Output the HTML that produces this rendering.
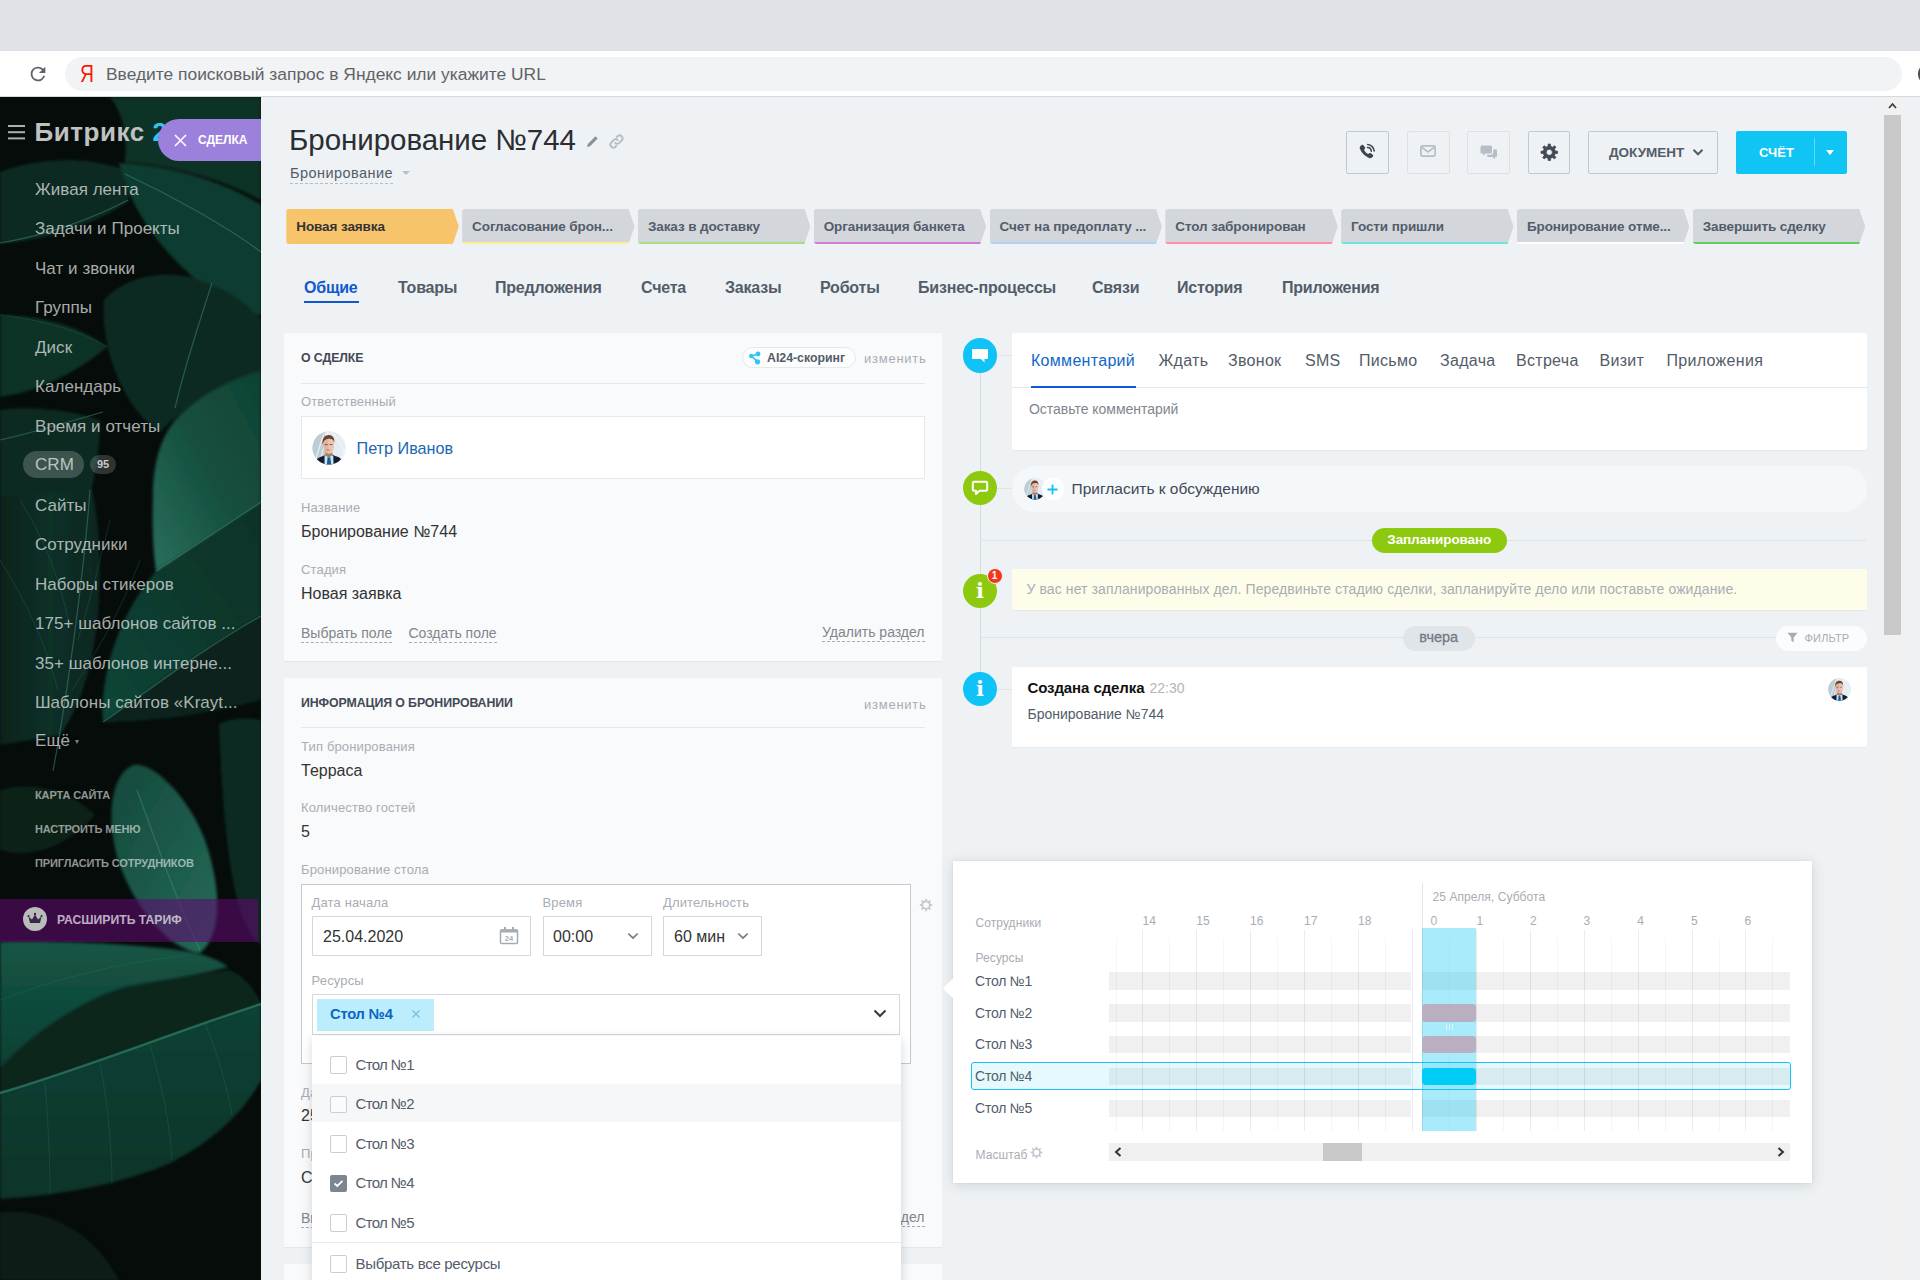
<!DOCTYPE html>
<html lang="ru"><head><meta charset="utf-8"><title>Бронирование №744</title>
<style>
*{box-sizing:border-box;margin:0;padding:0}
html,body{width:1920px;height:1280px;overflow:hidden;background:#eef2f4;font-family:"Liberation Sans",sans-serif;color:#333}
.abs{position:absolute}
#chrome-top{left:0;top:0;width:1920px;height:51px;background:#dee1e6}
#chrome-bar{left:0;top:51px;width:1920px;height:46px;background:#fff;border-bottom:1px solid #d5d9dd}
#omni{left:65px;top:57px;width:1837px;height:34px;border-radius:17px;background:#f1f3f4}
#omni-text{left:106px;top:63px;font-size:17.400px;line-height:22px;color:#5f6368;white-space:nowrap}
#ya{left:80px;top:61px;font-size:24px;line-height:26px;color:#fc1500;font-weight:400;transform:scaleX(.8);transform-origin:0 0}
/* sidebar */
#side{left:0;top:97px;width:261px;height:1183px;background:#07100e;overflow:hidden}
#side svg.bg{position:absolute;left:0;top:0}
.mi{position:absolute;left:35px;font-size:17px;line-height:22px;color:rgba(255,255,255,.66);white-space:nowrap;letter-spacing:.04px}
.ms{position:absolute;left:35px;font-size:11px;line-height:14px;font-weight:bold;color:rgba(255,255,255,.56);white-space:nowrap;letter-spacing:-.12px}
/* main */
#main{left:261px;top:97px;width:1623px;height:1183px;background:#eef2f4}
#title{left:289px;top:121.800px;font-size:29.5px;line-height:36px;color:#2a2e33;white-space:nowrap;letter-spacing:-.05px}
#subtitle{left:290px;top:164px;font-size:14.5px;line-height:18px;color:#535c69;border-bottom:1px dashed #b5bcc3;white-space:nowrap;padding-bottom:1px;letter-spacing:.45px}
.hbtn{top:131px;width:42.500px;height:43px;border:1px solid #c2c8ce;border-radius:2px;background:transparent}
.hbtn.dis{border-color:#dde1e5}
.stage{top:209px;width:172.500px;height:35px;padding-left:10px;font-size:13.5px;font-weight:bold;line-height:36px;white-space:nowrap;letter-spacing:-.1px;border-radius:3px 0 0 3px;clip-path:polygon(0 0,166.500px 0,172.500px 50%,166.500px 100%,0 100%)}
.tab{top:278px;font-size:16px;line-height:20px;font-weight:bold;color:#535c69;white-space:nowrap;letter-spacing:-.2px}
.tab.act{color:#1058d0}
.card{background:#f9fafb;box-shadow:0 1px 1px rgba(0,0,0,.04)}
.ctitle{font-size:12.350px;line-height:17px;font-weight:bold;color:#424956;white-space:nowrap;letter-spacing:-.1px}
.chg{font-size:13px;line-height:17px;color:#a8adb4;white-space:nowrap;letter-spacing:.75px}
.hr{height:1px;background:#e4e8eb}
.lbl{font-size:13px;line-height:17px;color:#a8adb4;white-space:nowrap;letter-spacing:.15px}
.val{font-size:16px;line-height:22px;color:#333;white-space:nowrap}
.lnk{font-size:14px;line-height:18px;color:#80868e;white-space:nowrap;border-bottom:1px dashed #a8adb4}
.inp{height:39.500px;background:#fff;border:1px solid #d3d8dd}
.circ{margin-top:-.5px;left:962.500px;width:34.500px;height:34.500px;border-radius:50%}
.ico-i{width:34px;height:34px;color:#fff;font-family:"DejaVu Serif","Liberation Serif",serif;font-weight:bold;font-size:21px;line-height:33px;text-align:center}
.rtab{top:351px;font-size:16px;line-height:20px;color:#535c69;white-space:nowrap;letter-spacing:.3px}
.plbl{font-size:12px;line-height:15px;color:#a8adb4;white-space:nowrap;letter-spacing:.08px}

</style></head><body>
<div id="chrome-top" class="abs"></div>
<div id="chrome-bar" class="abs"></div>
<div id="omni" class="abs"></div>
<svg class="abs" style="left:27px;top:63px" width="22" height="22" viewBox="0 0 24 24"><path d="M17.65 6.35A7.95 7.95 0 0 0 12 4a8 8 0 1 0 7.73 10h-2.08A6 6 0 1 1 12 6c1.66 0 3.14.69 4.22 1.78L13 11h7V4l-2.35 2.35z" fill="#5f6368"/></svg>
<div id="ya" class="abs">Я</div>
<div id="omni-text" class="abs">Введите поисковый запрос в Яндекс или укажите URL</div>
<div class="abs" style="left:1917.500px;top:63px;width:22px;height:22px;border-radius:11px;background:#4a4d51"></div>

<div id="side" class="abs">
<svg class="bg" width="261" height="1183" viewBox="0 97 261 1183">
<defs>
<filter id="b2" x="-10%" y="-10%" width="120%" height="120%"><feGaussianBlur stdDeviation="1.600"/></filter>
<filter id="b1"><feGaussianBlur stdDeviation=".7"/></filter>
<linearGradient id="gE" x1="1" y1="0" x2="0" y2="1"><stop offset="0" stop-color="#0f4234"/><stop offset=".5" stop-color="#15503f"/><stop offset="1" stop-color="#2a6f5d"/></linearGradient>
<linearGradient id="gI" x1="0" y1="0" x2="0" y2="1"><stop offset="0" stop-color="#135545"/><stop offset="1" stop-color="#0e4033"/></linearGradient>
<linearGradient id="gH" x1="0" y1="0" x2="0" y2="1"><stop offset="0" stop-color="#0f4235"/><stop offset="1" stop-color="#0b3329"/></linearGradient>
<linearGradient id="gG" x1="0" y1="0" x2="1" y2="1"><stop offset="0" stop-color="#14493b"/><stop offset="1" stop-color="#256a59"/></linearGradient>
<linearGradient id="gF" x1="0" y1="0" x2="1" y2="0"><stop offset="0" stop-color="#08231d"/><stop offset=".5" stop-color="#0c3028"/><stop offset="1" stop-color="#092720"/></linearGradient>
<linearGradient id="gE2" x1="0" y1="1" x2="1" y2="0"><stop offset="0" stop-color="#114638"/><stop offset=".6" stop-color="#0c372c"/><stop offset="1" stop-color="#0b3229"/></linearGradient>
</defs>
<rect x="0" y="97" width="261" height="1183" fill="#060c0a"/>
<g filter="url(#b2)">
<!-- A top right -->
<path d="M110 97 L261 97 L261 200 C220 178 170 165 125 162 C128 135 122 112 110 97Z" fill="#0b3328"/>
<!-- B -->
<path d="M119 163 C170 165 225 182 261 205 L261 316 C235 305 205 290 180 265 C150 235 128 200 119 163Z" fill="#0e3e31"/>
<!-- C left horizontal -->
<path d="M0 172 C30 160 80 155 119 168 C128 180 130 195 128 202 C100 220 60 238 0 244Z" fill="#0a2c24"/>
<!-- D center -->
<path d="M104 300 C125 278 160 268 200 280 C230 290 250 305 261 320 L261 372 C225 385 190 400 160 432 C125 410 100 350 104 300Z" fill="#0a2a22"/>
<!-- F' left horizontal 315-396 -->
<path d="M0 315 C30 315 75 322 107 347 C80 370 40 392 0 397Z" fill="#0b3028"/>
<!-- bottom-left of top third -->
<path d="M0 410 C35 405 75 412 100 420 C100 450 95 475 90 496 L0 496Z" fill="#0a2a22"/>
<!-- F left big -->
<path d="M0 496 L92 490 C99 520 101 560 99 600 C96 650 85 700 60 735 L0 745Z" fill="url(#gF)"/>
<!-- E2 dark leaf under E -->
<path d="M156 571 L261 503 L261 616 C200 650 150 690 103 722 C100 680 115 620 156 571Z" fill="url(#gE2)"/>
<path d="M103 722 C150 690 200 650 261 616 L261 700 C215 712 160 722 103 722Z" fill="#08221c"/>
<!-- E bright -->
<path d="M261 371 C235 378 205 392 180 415 C160 435 153 465 153 496 C152 525 153 550 156 571 L261 503Z" fill="url(#gE)"/>
<!-- right dark strip lower -->
<path d="M219 724 C240 715 261 720 261 720 L261 945 C240 930 225 880 219 724Z" fill="#092a23"/>
<!-- small top-left lower region -->
<path d="M0 790 C30 780 70 790 95 815 C70 845 30 860 0 850Z" fill="#082019"/>
<!-- G -->
<path d="M134 765 C150 762 185 790 205 840 C222 890 222 935 200 953 C170 950 135 910 118 860 C105 815 112 772 134 765Z" fill="url(#gG)"/>
<!-- I upper leaf -->
<path d="M0 942 C60 940 150 945 190 952 C210 956 222 962 228 967 C200 975 160 980 125 987 C80 1000 30 1035 0 1068Z" fill="url(#gI)"/>
<!-- H upper dark half -->
<path d="M0 1068 C30 1035 80 1000 125 987 C160 980 200 975 228 970 C245 975 255 990 261 1004 C180 1030 80 1070 0 1093Z" fill="#0a261f"/>
<!-- H lower half -->
<path d="M0 1093 C80 1070 180 1030 261 1004 L261 1080 C245 1110 215 1140 172 1162 C130 1182 60 1196 0 1199Z" fill="url(#gH)"/>
<path d="M0 1212 C40 1208 90 1225 119 1280 L0 1280Z" fill="#081c18"/>
<path d="M140 1215 C170 1200 215 1195 250 1200 C225 1215 180 1225 140 1215Z" fill="#07171300"/>
</g>
<!-- veins -->
<g fill="none" stroke="#3f8c79" stroke-opacity=".5" stroke-width="1.200" filter="url(#b1)">
<path d="M125 174 C170 195 225 225 261 252"/>
<path d="M261 502 L156 571"/>
<path d="M261 616 C200 650 150 690 103 722"/>
<path d="M90 490 C85 560 70 680 53 771"/>
<path d="M137 790 C155 840 180 910 200 950"/>
<path d="M0 1093 C80 1070 180 1030 261 1004" stroke-width="2.400" stroke="#2f8068" stroke-opacity=".7"/>
<path d="M0 243 C50 235 100 215 128 200"/>
<path d="M0 440 C35 432 75 420 103 412"/>
<path d="M212 283 C200 320 185 365 175 408"/>
</g>
<g fill="none" stroke="#2f7564" stroke-opacity=".3" stroke-width="1" filter="url(#b1)">
<path d="M45 1082 C48 1120 50 1160 50 1195"/><path d="M100 1063 C108 1105 112 1150 112 1185"/><path d="M150 1045 C162 1085 170 1125 172 1160"/><path d="M205 1023 C218 1055 228 1090 232 1115"/>
<path d="M20 500 C45 540 60 580 68 620"/><path d="M0 560 C25 600 45 640 58 690"/><path d="M110 520 C100 560 90 600 78 640"/><path d="M140 560 C125 600 105 640 72 690"/>
<path d="M0 1000 C40 985 100 965 190 955"/>
<path d="M0 315 C40 320 80 330 107 347"/>
</g>
</svg>

<div class="abs" style="left:8px;top:27.500px;width:17px;height:2px;background:#adb0af;box-shadow:0 6.200px 0 #adb0af,0 12.400px 0 #adb0af"></div>
<div class="abs" style="left:34.500px;top:18.700px;font-size:26px;line-height:32px;font-weight:bold;color:#c0c2c1;white-space:nowrap;letter-spacing:.55px">Битрикс <span style="color:#2fc6f6">24</span></div>
<div class="abs" style="left:158px;top:22px;width:110px;height:42px;border-radius:21px 0 0 21px;background:#9b80dc"></div>
<svg class="abs" style="left:174px;top:37px" width="13" height="13" viewBox="0 0 13 13"><path d="M1 1L12 12M12 1L1 12" stroke="#fff" stroke-width="1.6" fill="none"/></svg>
<div class="abs" style="left:198px;top:36px;font-size:12px;line-height:15px;font-weight:bold;color:#fff;letter-spacing:0px">СДЕЛКА</div>

<div class="mi" style="top:82px">Живая лента</div>
<div class="mi" style="top:121px">Задачи и Проекты</div>
<div class="mi" style="top:161px">Чат и звонки</div>
<div class="mi" style="top:200px">Группы</div>
<div class="mi" style="top:240px">Диск</div>
<div class="mi" style="top:279px">Календарь</div>
<div class="mi" style="top:319px">Время и отчеты</div>
<div class="abs" style="left:23px;top:354px;width:61px;height:27px;border-radius:14px;background:rgba(255,255,255,.2)"></div>
<div class="mi" style="top:357px">CRM</div>
<div class="abs" style="left:90px;top:358px;width:26px;height:19px;border-radius:10px;background:rgba(255,255,255,.17);color:rgba(255,255,255,.75);font-size:11px;font-weight:bold;line-height:19px;text-align:center">95</div>
<div class="mi" style="top:398px">Сайты</div>
<div class="mi" style="top:437px">Сотрудники</div>
<div class="mi" style="top:477px">Наборы стикеров</div>
<div class="mi" style="top:516px">175+ шаблонов сайтов ...</div>
<div class="mi" style="top:556px">35+ шаблонов интерне...</div>
<div class="mi" style="top:595px">Шаблоны сайтов «Krayt...</div>
<div class="mi" style="top:633px">Ещё <span style="font-size:8px;position:relative;top:-2px;opacity:.7">▾</span></div>
<div class="ms" style="top:691px">КАРТА САЙТА</div>
<div class="ms" style="top:725px">НАСТРОИТЬ МЕНЮ</div>
<div class="ms" style="top:759px">ПРИГЛАСИТЬ СОТРУДНИКОВ</div>
<div class="abs" style="left:0;top:801.500px;width:258px;height:43.500px;background:rgba(96,8,112,.58)"></div>
<div class="abs" style="left:23px;top:810px;width:24px;height:24px;border-radius:12px;background:#b9bcbb"></div>
<svg class="abs" style="left:27px;top:815px" width="16" height="14" viewBox="0 0 16 14"><path d="M1.5 4.5L5 7.5L8 2.5L11 7.5L14.500 4.5L13 11H3Z" fill="#3a2748"/><circle cx="8" cy="2" r="1.2" fill="#3a2748"/><circle cx="1.500" cy="4" r="1.1" fill="#3a2748"/><circle cx="14.500" cy="4" r="1.1" fill="#3a2748"/></svg>
<div class="abs" style="left:57px;top:815px;font-size:12.200px;line-height:16px;font-weight:bold;color:rgba(255,255,255,.68);white-space:nowrap">РАСШИРИТЬ ТАРИФ</div>

</div>
<div id="main" class="abs"></div>
<div class="abs" id="title">Бронирование №744</div>
<svg class="abs" style="left:586px;top:135px" width="13" height="13" viewBox="0 0 13 13"><path d="M1 12L1.800 9L9.500 1.300L11.700 3.500L4 11.200Z" fill="#8a9099"/></svg>
<svg class="abs" style="left:608px;top:133px" width="17" height="17" viewBox="0 0 17 17"><g fill="none" stroke="#b3bbc3" stroke-width="1.800" stroke-linecap="round"><path d="M7.200 9.800a3 3 0 0 0 4.200 0l2.600-2.600a3 3 0 0 0-4.200-4.200l-1 1"/><path d="M9.800 7.200a3 3 0 0 0-4.200 0l-2.600 2.600a3 3 0 0 0 4.200 4.200l1-1"/></g></svg>
<div class="abs" id="subtitle">Бронирование</div><div class="abs" style="left:402px;top:171px;width:0;height:0;border:4px solid transparent;border-top:4px solid #b8bfc6"></div>
<div class="abs hbtn" style="left:1346px"></div>
<svg class="abs" style="left:1357px;top:142px" width="20" height="20" viewBox="0 0 20 20"><path d="M4.500 3.200c.5-.5 1.300-.5 1.800 0l1.600 1.900c.4.500.4 1.100 0 1.600l-.9 1.100c.9 1.900 2.200 3.300 4.100 4.300l1.200-.9c.5-.4 1.100-.4 1.600 0l1.900 1.500c.5.500.6 1.300.1 1.800l-.9 1c-.8.800-2 .9-3 .5-4.400-1.800-7.400-4.900-9.100-9.200-.4-1-.2-2.200.6-2.900z" fill="#3e4550"/><path d="M10.500 5.500a4 4 0 0 1 3.800 3.800M10.700 2.600a7 7 0 0 1 6.500 6.500" fill="none" stroke="#3e4550" stroke-width="1.500" stroke-linecap="round"/></svg>
<div class="abs hbtn dis" style="left:1407px"></div>
<svg class="abs" style="left:1420px;top:145px" width="16" height="12" viewBox="0 0 16 12"><rect x=".9" y=".9" width="14.200" height="10.200" rx="1.500" fill="none" stroke="#b7bdc4" stroke-width="1.700"/><path d="M1.800 2.300L8 7L14.200 2.300" fill="none" stroke="#b7bdc4" stroke-width="1.600"/></svg>
<div class="abs hbtn dis" style="left:1467px"></div>
<svg class="abs" style="left:1479.500px;top:144.500px" width="18" height="15" viewBox="0 0 18 15"><path d="M2 .5h8.500a1.500 1.500 0 0 1 1.500 1.500v5a1.500 1.500 0 0 1-1.500 1.500H5.500L3 10.700V8.500H2A1.500 1.500 0 0 1 .5 7V2A1.500 1.500 0 0 1 2 .5z" fill="#b7bdc4"/><path d="M13.200 4.200h2.300A1.500 1.500 0 0 1 17 5.700v4.800a1.500 1.500 0 0 1-1.500 1.500H15v2.200L12.500 12H8.500A1.500 1.500 0 0 1 7.200 9.800h3.500a2.500 2.500 0 0 0 2.500-2.500z" fill="#b7bdc4"/></svg>
<div class="abs hbtn" style="left:1527.500px"></div>
<svg class="abs" style="left:1540px;top:142.700px" width="18.600" height="18.600" viewBox="0 0 20 20"><path fill-rule="evenodd" d="M16.46 8.65L18.92 8.82L18.92 11.18L16.46 11.35L15.52 13.61L17.15 15.47L15.47 17.15L13.61 15.52L11.35 16.46L11.18 18.92L8.82 18.92L8.65 16.46L6.39 15.52L4.53 17.15L2.85 15.47L4.48 13.61L3.54 11.35L1.08 11.18L1.08 8.82L3.54 8.65L4.48 6.39L2.85 4.53L4.53 2.85L6.39 4.48L8.65 3.54L8.82 1.08L11.18 1.08L11.35 3.54L13.61 4.48L15.47 2.85L17.15 4.53L15.52 6.39ZM6.70 10.00a3.30 3.30 0 1 0 6.60 0a3.30 3.30 0 1 0 -6.60 0Z" fill="#424956" stroke="#424956" stroke-width=".8" stroke-linejoin="round"/></svg>
<div class="abs hbtn" style="left:1588px;width:130px"></div>
<div class="abs" style="left:1609px;top:144px;font-size:13.500px;line-height:18px;font-weight:bold;color:#535c69;letter-spacing:0">ДОКУМЕНТ</div>
<svg class="abs" style="left:1692px;top:148px" width="12" height="9" viewBox="0 0 12 9"><path d="M1.500 1.800L6 6.300L10.500 1.800" fill="none" stroke="#535c69" stroke-width="2"/></svg>
<div class="abs" style="left:1736px;top:131px;width:111px;height:43px;background:#10c4f3;border-radius:2px"></div>
<div class="abs" style="left:1814px;top:138px;width:1px;height:28px;background:rgba(255,255,255,.35)"></div>
<div class="abs" style="left:1759px;top:144px;font-size:13px;line-height:18px;font-weight:bold;color:#fff;letter-spacing:0">СЧЁТ</div>
<div class="abs" style="left:1826px;top:150px;width:0;height:0;border:4.500px solid transparent;border-top:5px solid #fff"></div>
<div class="abs stage" style="left:286.3px;background:linear-gradient(#f7c46c 0,#f7c46c 33px,#f7c46c 33px);color:#333">Новая заявка</div>
<div class="abs stage" style="left:462.1px;background:linear-gradient(#d3d7dc 0,#d3d7dc 33px,#fcef94 33px);color:#535c69">Согласование брон...</div>
<div class="abs stage" style="left:637.9px;background:linear-gradient(#d3d7dc 0,#d3d7dc 33px,#a5e17a 33px);color:#535c69">Заказ в доставку</div>
<div class="abs stage" style="left:813.7px;background:linear-gradient(#d3d7dc 0,#d3d7dc 33px,#d779d9 33px);color:#535c69">Организация банкета</div>
<div class="abs stage" style="left:989.5px;background:linear-gradient(#d3d7dc 0,#d3d7dc 33px,#a9d4f6 33px);color:#535c69">Счет на предоплату ...</div>
<div class="abs stage" style="left:1165.3px;background:linear-gradient(#d3d7dc 0,#d3d7dc 33px,#ff8fa6 33px);color:#535c69">Стол забронирован</div>
<div class="abs stage" style="left:1341.1px;background:linear-gradient(#d3d7dc 0,#d3d7dc 33px,#6fe3dc 33px);color:#535c69">Гости пришли</div>
<div class="abs stage" style="left:1516.9px;background:linear-gradient(#d3d7dc 0,#d3d7dc 33px,#ffffff 33px);color:#535c69">Бронирование отме...</div>
<div class="abs stage" style="left:1692.7px;background:linear-gradient(#d3d7dc 0,#d3d7dc 33px,#5fce5f 33px);color:#535c69">Завершить сделку</div>
<div class="abs tab act" style="left:304px">Общие</div>
<div class="abs tab" style="left:398px">Товары</div>
<div class="abs tab" style="left:495px">Предложения</div>
<div class="abs tab" style="left:641px">Счета</div>
<div class="abs tab" style="left:725px">Заказы</div>
<div class="abs tab" style="left:820px">Роботы</div>
<div class="abs tab" style="left:918px">Бизнес-процессы</div>
<div class="abs tab" style="left:1092px">Связи</div>
<div class="abs tab" style="left:1177px">История</div>
<div class="abs tab" style="left:1282px">Приложения</div>
<div class="abs" style="left:304px;top:301px;width:55px;height:2px;background:#1058d0"></div>
<div class="abs card" style="left:284px;top:333px;width:658px;height:328px"></div>
<div class="abs ctitle" style="left:301px;top:350px">О СДЕЛКЕ</div>
<div class="abs" style="left:742px;top:347px;width:114px;height:21px;border:1px solid #e6e9ec;border-radius:11px;background:#fcfdfd"></div>
<svg class="abs" style="left:748px;top:350.500px" width="14" height="14" viewBox="0 0 14 14"><g fill="#2fc6f6"><circle cx="3.200" cy="5" r="2.200"/><circle cx="10" cy="3" r="2.400"/><circle cx="9.500" cy="10.800" r="2.600"/><path d="M3 4.300L10 2.300L10.300 3.700L3.400 5.800ZM3.700 4.400L10.200 10L9 11.300L2.800 5.800Z"/></g></svg>
<div class="abs" style="left:767px;top:349.500px;font-size:12.300px;line-height:16px;font-weight:bold;color:#535c69;white-space:nowrap">AI24-скоринг</div>
<div class="abs chg" style="left:864px;top:350px">изменить</div>
<div class="abs hr" style="left:301px;top:382.500px;width:624px"></div>
<div class="abs lbl" style="left:301px;top:393px">Ответственный</div>
<div class="abs" style="left:301px;top:415.500px;width:624px;height:63px;background:#fff;border:1px solid #e6eaed"></div>
<svg class="abs" style="left:312px;top:431px" width="34" height="34" viewBox="0 0 34 34"><defs><clipPath id="av1"><circle cx="17" cy="17" r="16.500"/></clipPath></defs><g clip-path="url(#av1)"><rect width="34" height="34" fill="#d3e0e7"/><path d="M0 0h13v34H0z" fill="#bccdd6"/><path d="M13 0h21v34H13z" fill="#e3edf2"/><path d="M3 30L12 2M7 34L16 0M20 0L34 22M24 0L34 14M26 34L34 16" stroke="#f4f8fa" stroke-width="1.200" fill="none" opacity=".8"/><path d="M2 34C3 28.500 6 26.500 11.500 25l4-2.200h3.500l4 2.200C28 26 30.500 28 31.500 34z" fill="#161c31"/><path d="M12.600 24.800L16.500 23l4.800 1.800L21.500 34h-9z" fill="#c9e6f4"/><path d="M15.600 26.200h2.600l1.200 7.800h-4.600z" fill="#1a5f98"/><path d="M13.300 20.500h7v3.300c-1 1.600-2.200 2.300-3.500 2.300s-2.500-.7-3.500-2.300z" fill="#b27a60"/><path d="M10.900 12.500c0-4.500 2.400-7 5.800-7s5.500 2.500 5.500 7c0 4.300-1.300 8-2.800 9.500-1 .9-4 .9-5.200 0-1.800-1.500-3.300-5.200-3.300-9.500z" fill="#e2b39d"/><path d="M16.500 6c2.800 0 5 2 5.600 6 .2 3-.6 7-2.300 9.600-.6.600-1.800.9-3.300.9z" fill="#f0cfc0" opacity=".7"/><path d="M10.600 13.500C10 8 12.500 4 16.800 4c3.800 0 5.800 2.800 5.500 7.500-.6-2.200-1.700-3.300-3.200-3.600-2.200-.4-4.500 0-6 1-1.300 1-2 2.500-2.500 4.600z" fill="#6e4129"/><path d="M12.800 13.600h2.800M17.600 13.600h2.800" stroke="#4a2f25" stroke-width="1" opacity=".75"/><path d="M14.800 19h3.600" stroke="#a8574d" stroke-width=".9" opacity=".7"/></g></svg>
<div class="abs" style="left:356.500px;top:437px;font-size:16.200px;line-height:22px;color:#2067b0;white-space:nowrap">Петр Иванов</div>
<div class="abs lbl" style="left:301px;top:499px">Название</div>
<div class="abs val" style="left:301px;top:521px">Бронирование №744</div>
<div class="abs lbl" style="left:301px;top:561px">Стадия</div>
<div class="abs val" style="left:301px;top:582.500px">Новая заявка</div>
<div class="abs lnk" style="left:301px;top:624px">Выбрать поле</div>
<div class="abs lnk" style="left:408.500px;top:624px">Создать поле</div>
<div class="abs lnk" style="left:822px;top:623px">Удалить раздел</div>

<div class="abs card" style="left:284px;top:678px;width:658px;height:569px"></div>
<div class="abs ctitle" style="left:301px;top:695px">ИНФОРМАЦИЯ О БРОНИРОВАНИИ</div>
<div class="abs chg" style="left:864px;top:696px">изменить</div>
<div class="abs hr" style="left:301px;top:726.800px;width:624px"></div>
<div class="abs lbl" style="left:301px;top:738px">Тип бронирования</div>
<div class="abs val" style="left:301px;top:759.500px">Терраса</div>
<div class="abs lbl" style="left:301px;top:799px">Количество гостей</div>
<div class="abs val" style="left:301px;top:820.500px">5</div>
<div class="abs lbl" style="left:301px;top:860.5px">Бронирование стола</div>
<div class="abs" style="left:301px;top:883.500px;width:610px;height:180px;background:#fff;border:1px solid #c3c9cf"></div>
<svg class="abs" style="left:919px;top:898px" width="14" height="14" viewBox="0 0 20 20"><path fill-rule="evenodd" d="M16.46 8.65L18.92 8.82L18.92 11.18L16.46 11.35L15.52 13.61L17.15 15.47L15.47 17.15L13.61 15.52L11.35 16.46L11.18 18.92L8.82 18.92L8.65 16.46L6.39 15.52L4.53 17.15L2.85 15.47L4.48 13.61L3.54 11.35L1.08 11.18L1.08 8.82L3.54 8.65L4.48 6.39L2.85 4.53L4.53 2.85L6.39 4.48L8.65 3.54L8.82 1.08L11.18 1.08L11.35 3.54L13.61 4.48L15.47 2.85L17.15 4.53L15.52 6.39ZM5.90 10.00a4.10 4.10 0 1 0 8.20 0a4.10 4.10 0 1 0 -8.20 0Z" fill="#c3c8ce"/></svg>
<div class="abs lbl" style="left:311.500px;top:893.5px">Дата начала</div>
<div class="abs lbl" style="left:542.500px;top:893.5px">Время</div>
<div class="abs lbl" style="left:663px;top:893.5px">Длительность</div>
<div class="abs inp" style="left:312px;top:916.300px;width:219px"></div>
<div class="abs inp" style="left:542.500px;top:916.300px;width:109.500px"></div>
<div class="abs inp" style="left:663px;top:916.300px;width:98.500px"></div>
<div class="abs val" style="left:323px;top:925.500px">25.04.2020</div>
<div class="abs val" style="left:553px;top:925.500px">00:00</div>
<div class="abs val" style="left:674px;top:925.500px">60 мин</div>
<svg class="abs" style="left:499px;top:926px" width="20" height="19" viewBox="0 0 20 19"><rect x="1.500" y="4" width="17" height="13.500" rx="1" fill="none" stroke="#a5abb3" stroke-width="1.500"/><rect x="1.500" y="3.500" width="17" height="3" fill="#a5abb3"/><rect x="5" y="1" width="2" height="4" fill="#a5abb3"/><rect x="13" y="1" width="2" height="4" fill="#a5abb3"/><text x="10" y="15" text-anchor="middle" font-family="Liberation Sans, sans-serif" font-size="7.500" font-weight="bold" fill="#a5abb3">24</text></svg>
<svg class="abs" style="left:627px;top:932px" width="12" height="8" viewBox="0 0 12 8"><path d="M1.300 1.500L6 6L10.700 1.500" fill="none" stroke="#6f7782" stroke-width="1.700"/></svg>
<svg class="abs" style="left:737px;top:932px" width="12" height="8" viewBox="0 0 12 8"><path d="M1.300 1.500L6 6L10.700 1.500" fill="none" stroke="#6f7782" stroke-width="1.700"/></svg>
<div class="abs lbl" style="left:311.500px;top:971.5px">Ресурсы</div>
<div class="abs" style="left:312px;top:994px;width:588px;height:41px;background:#fff;border:1px solid #d3d8dd"></div>
<div class="abs" style="left:316.500px;top:998.500px;width:117px;height:32.500px;background:#bcedfc"></div>
<div class="abs" style="left:330px;top:1004px;font-size:14.700px;line-height:20px;color:#0b66c3;white-space:nowrap;font-weight:bold;letter-spacing:-.2px">Стол №4</div>
<svg class="abs" style="left:411px;top:1009px" width="10" height="10" viewBox="0 0 10 10"><path d="M1.500 1.500L8.500 8.500M8.500 1.500L1.500 8.500" stroke="#7fc4e6" stroke-width="1.500" fill="none"/></svg>
<svg class="abs" style="left:873px;top:1009px" width="14" height="9" viewBox="0 0 14 9"><path d="M1.500 1.500L7 7L12.500 1.500" fill="none" stroke="#333a44" stroke-width="2"/></svg>
<div class="abs lbl" style="left:301px;top:1084px">Дата окончания</div>
<div class="abs val" style="left:301px;top:1105px">25.04.2020</div>
<div class="abs lbl" style="left:301px;top:1145px">Примечание</div>
<div class="abs val" style="left:301px;top:1167px">Столик у окна</div>
<div class="abs lnk" style="left:301px;top:1209px">Выбрать поле</div>
<div class="abs lnk" style="left:822px;top:1208px">Удалить раздел</div>
<div class="abs card" style="left:284px;top:1264px;width:658px;height:40px"></div>

<div class="abs" style="left:979.500px;top:356px;width:1px;height:333px;background:#d5dadf"></div>
<div class="abs" style="left:997px;top:355px;width:15px;height:1px;background:#dfe4e8"></div>
<div class="abs" style="left:997px;top:488px;width:15px;height:1px;background:#dfe4e8"></div>
<div class="abs" style="left:997px;top:689px;width:15px;height:1px;background:#dfe4e8"></div>
<div class="abs" style="left:980px;top:539.500px;width:886px;height:1px;background:#dde2e6"></div>
<div class="abs" style="left:980px;top:637px;width:886px;height:1px;background:#dde2e6"></div>
<!-- circles -->
<div class="abs circ" style="top:338.500px;background:#10c3f6"></div>
<svg class="abs" style="left:970.500px;top:348px" width="18" height="16" viewBox="0 0 18 16"><path d="M2 1h14a1 1 0 0 1 1 1v8a1 1 0 0 1-1 1h-2.500v3.500L10 11H2a1 1 0 0 1-1-1V2a1 1 0 0 1 1-1z" fill="#fff"/></svg>
<div class="abs circ" style="top:471px;background:#8dc90f"></div>
<svg class="abs" style="left:970.500px;top:480px" width="18" height="17" viewBox="0 0 18 17"><path d="M3 1.800h12a1.200 1.200 0 0 1 1.200 1.200v6.500a1.200 1.200 0 0 1-1.200 1.200H8.500L5 14v-3.300H3a1.200 1.200 0 0 1-1.200-1.200V3A1.200 1.200 0 0 1 3 1.800z" fill="none" stroke="#fff" stroke-width="2" stroke-linejoin="round"/></svg>
<div class="abs circ" style="top:574px;background:#8dc90f"></div>
<div class="abs ico-i" style="left:963px;top:574px">i</div>
<div class="abs" style="left:986.500px;top:567.500px;width:16px;height:16px;border-radius:8px;background:#f4361e;border:1.500px solid #eef2f4;color:#fff;font-size:10px;font-weight:bold;line-height:13px;text-align:center">1</div>
<div class="abs circ" style="top:672px;background:#10c3f6"></div>
<div class="abs ico-i" style="left:963px;top:672px">i</div>
<!-- comment card -->
<div class="abs" style="left:1011.500px;top:333px;width:855px;height:116.500px;border-radius:2px;background:#fff;box-shadow:0 1px 1px rgba(0,0,0,.04)"></div>
<div class="abs" style="left:1011.500px;top:387px;width:855px;height:1px;background:#e6eaed"></div>
<div class="abs" style="left:1031px;top:386px;width:104.500px;height:2px;background:#1058d0"></div>
<div class="abs rtab" style="left:1031px;color:#1068c8">Комментарий</div>
<div class="abs rtab" style="left:1158.500px">Ждать</div>
<div class="abs rtab" style="left:1228px">Звонок</div>
<div class="abs rtab" style="left:1305px">SMS</div>
<div class="abs rtab" style="left:1359px">Письмо</div>
<div class="abs rtab" style="left:1440px">Задача</div>
<div class="abs rtab" style="left:1516px">Встреча</div>
<div class="abs rtab" style="left:1599.500px">Визит</div>
<div class="abs rtab" style="left:1666.500px">Приложения</div>
<div class="abs" style="left:1029px;top:400px;font-size:14px;line-height:18px;color:#80868e;white-space:nowrap;letter-spacing:-.02px">Оставьте комментарий</div>
<!-- invite -->
<div class="abs" style="left:1011.500px;top:466px;width:855px;height:46px;border-radius:23px;background:#f5f8fa"></div>
<svg class="abs" style="left:1024px;top:478px" width="22" height="22" viewBox="0 0 34 34"><g clip-path="url(#av1)"><rect width="34" height="34" fill="#d3e0e7"/><path d="M0 0h13v34H0z" fill="#bccdd6"/><path d="M13 0h21v34H13z" fill="#e3edf2"/><path d="M3 30L12 2M7 34L16 0M20 0L34 22M24 0L34 14M26 34L34 16" stroke="#f4f8fa" stroke-width="1.200" fill="none" opacity=".8"/><path d="M2 34C3 28.500 6 26.500 11.500 25l4-2.200h3.500l4 2.200C28 26 30.500 28 31.500 34z" fill="#161c31"/><path d="M12.600 24.800L16.500 23l4.800 1.800L21.500 34h-9z" fill="#c9e6f4"/><path d="M15.600 26.200h2.600l1.200 7.800h-4.600z" fill="#1a5f98"/><path d="M13.300 20.500h7v3.300c-1 1.600-2.200 2.300-3.500 2.300s-2.500-.7-3.500-2.300z" fill="#b27a60"/><path d="M10.900 12.500c0-4.500 2.400-7 5.800-7s5.500 2.500 5.500 7c0 4.300-1.300 8-2.800 9.500-1 .9-4 .9-5.200 0-1.800-1.500-3.300-5.200-3.300-9.500z" fill="#e2b39d"/><path d="M16.500 6c2.800 0 5 2 5.600 6 .2 3-.6 7-2.300 9.600-.6.600-1.800.9-3.300.9z" fill="#f0cfc0" opacity=".7"/><path d="M10.600 13.500C10 8 12.500 4 16.800 4c3.800 0 5.800 2.800 5.500 7.500-.6-2.200-1.700-3.300-3.200-3.600-2.200-.4-4.500 0-6 1-1.300 1-2 2.500-2.500 4.600z" fill="#6e4129"/><path d="M12.800 13.600h2.800M17.600 13.600h2.800" stroke="#4a2f25" stroke-width="1" opacity=".75"/><path d="M14.800 19h3.600" stroke="#a8574d" stroke-width=".9" opacity=".7"/></g></svg>
<div class="abs" style="left:1041.500px;top:478px;width:22px;height:22px;border-radius:11px;background:#fff"></div>
<svg class="abs" style="left:1047px;top:483.500px" width="11" height="11" viewBox="0 0 11 11"><path d="M5.500 0.500V10.500M0.500 5.500H10.500" stroke="#10c3f6" stroke-width="1.800" fill="none"/></svg>
<div class="abs" style="left:1071.500px;top:478.500px;font-size:15.500px;line-height:20px;color:#424956;white-space:nowrap;letter-spacing:0">Пригласить к обсуждению</div>
<!-- planned -->
<div class="abs" style="left:1371.500px;top:528px;width:135.500px;height:24.500px;border-radius:12.500px;background:#8dc90f;color:#fff;font-size:13.500px;font-weight:bold;line-height:24px;text-align:center;letter-spacing:-.1px">Запланировано</div>
<div class="abs" style="left:1011.500px;top:569px;width:855px;height:41px;background:#fefde9;box-shadow:0 1px 1px rgba(0,0,0,.04)"></div>
<div class="abs" style="left:1026.500px;top:580px;font-size:14px;line-height:18px;color:#a8adb4;white-space:nowrap;letter-spacing:.1px">У вас нет запланированных дел. Передвиньте стадию сделки, запланируйте дело или поставьте ожидание.</div>
<!-- yesterday -->
<div class="abs" style="left:1403px;top:626px;width:71.500px;height:24.500px;border-radius:12.500px;background:#dfe5e9;color:#727a84;font-size:14.500px;line-height:23.500px;text-align:center;-webkit-text-stroke:.3px #727a84">вчера</div>
<div class="abs" style="left:1775.500px;top:626px;width:91px;height:24.500px;border-radius:12.500px;background:#fbfcfd"></div>
<svg class="abs" style="left:1787px;top:632px" width="11" height="11" viewBox="0 0 11 11"><path d="M0.500 0.800h10L6.700 5.500v4.700L4.300 8.700V5.500z" fill="#a8adb4"/></svg>
<div class="abs" style="left:1804.500px;top:631px;font-size:11px;line-height:14px;color:#a8adb4;letter-spacing:.2px">ФИЛЬТР</div>
<!-- event -->
<div class="abs" style="left:1011.500px;top:666.500px;width:855px;height:80.500px;border-radius:2px;background:#fff;box-shadow:0 1px 1px rgba(0,0,0,.04)"></div>
<div class="abs" style="left:1027.500px;top:678px;font-size:15px;line-height:20px;color:#111;font-weight:bold;white-space:nowrap;letter-spacing:-.1px">Создана сделка</div>
<div class="abs" style="left:1149.500px;top:679px;font-size:14px;line-height:18px;color:#b0b5bb;white-space:nowrap">22:30</div>
<div class="abs" style="left:1027.500px;top:705px;font-size:14px;line-height:18px;color:#535c69;white-space:nowrap">Бронирование №744</div>
<svg class="abs" style="left:1828px;top:678px" width="23" height="23" viewBox="0 0 34 34"><g clip-path="url(#av1)"><rect width="34" height="34" fill="#d3e0e7"/><path d="M0 0h13v34H0z" fill="#bccdd6"/><path d="M13 0h21v34H13z" fill="#e3edf2"/><path d="M3 30L12 2M7 34L16 0M20 0L34 22M24 0L34 14M26 34L34 16" stroke="#f4f8fa" stroke-width="1.200" fill="none" opacity=".8"/><path d="M2 34C3 28.500 6 26.500 11.500 25l4-2.200h3.500l4 2.200C28 26 30.500 28 31.500 34z" fill="#161c31"/><path d="M12.600 24.800L16.500 23l4.800 1.800L21.500 34h-9z" fill="#c9e6f4"/><path d="M15.600 26.200h2.600l1.200 7.800h-4.600z" fill="#1a5f98"/><path d="M13.300 20.500h7v3.300c-1 1.600-2.200 2.300-3.500 2.300s-2.500-.7-3.500-2.300z" fill="#b27a60"/><path d="M10.900 12.500c0-4.500 2.400-7 5.800-7s5.500 2.500 5.500 7c0 4.300-1.300 8-2.800 9.500-1 .9-4 .9-5.200 0-1.800-1.500-3.300-5.200-3.300-9.500z" fill="#e2b39d"/><path d="M16.500 6c2.800 0 5 2 5.600 6 .2 3-.6 7-2.300 9.600-.6.600-1.800.9-3.300.9z" fill="#f0cfc0" opacity=".7"/><path d="M10.600 13.500C10 8 12.500 4 16.800 4c3.800 0 5.800 2.800 5.500 7.500-.6-2.200-1.700-3.300-3.200-3.600-2.200-.4-4.500 0-6 1-1.300 1-2 2.500-2.500 4.600z" fill="#6e4129"/><path d="M12.800 13.600h2.800M17.600 13.600h2.800" stroke="#4a2f25" stroke-width="1" opacity=".75"/><path d="M14.800 19h3.600" stroke="#a8574d" stroke-width=".9" opacity=".7"/></g></svg>

<div class="abs" style="left:953px;top:861px;width:859px;height:322px;background:#fff;box-shadow:0 2px 12px rgba(83,92,105,.2),0 0 2px rgba(83,92,105,.1)"></div>
<div class="abs" style="left:945.500px;top:980.500px;width:15px;height:15px;background:#fff;transform:rotate(45deg)"></div>
<div class="abs plbl" style="left:975.500px;top:916px">Сотрудники</div>
<div class="abs plbl" style="left:975.500px;top:951px">Ресурсы</div>
<div class="abs plbl" style="left:975.500px;top:1147.500px">Масштаб</div>
<svg class="abs" style="left:1030px;top:1146px" width="13" height="13" viewBox="0 0 20 20"><path fill-rule="evenodd" d="M16.46 8.65L18.92 8.82L18.92 11.18L16.46 11.35L15.52 13.61L17.15 15.47L15.47 17.15L13.61 15.52L11.35 16.46L11.18 18.92L8.82 18.92L8.65 16.46L6.39 15.52L4.53 17.15L2.85 15.47L4.48 13.61L3.54 11.35L1.08 11.18L1.08 8.82L3.54 8.65L4.48 6.39L2.85 4.53L4.53 2.85L6.39 4.48L8.65 3.54L8.82 1.08L11.18 1.08L11.35 3.54L13.61 4.48L15.47 2.85L17.15 4.53L15.52 6.39ZM5.90 10.00a4.10 4.10 0 1 0 8.20 0a4.10 4.10 0 1 0 -8.20 0Z" fill="#c3c8ce"/></svg>
<div class="abs" style="left:1109px;top:972.1px;width:302px;height:17.500px;background:#f0f0f0"></div>
<div class="abs" style="left:1422px;top:972.1px;width:368px;height:17.500px;background:#f0f0f0"></div>
<div class="abs" style="left:1109px;top:1004.0px;width:302px;height:17.500px;background:#f0f0f0"></div>
<div class="abs" style="left:1422px;top:1004.0px;width:368px;height:17.500px;background:#f0f0f0"></div>
<div class="abs" style="left:1109px;top:1035.9px;width:302px;height:17.500px;background:#f0f0f0"></div>
<div class="abs" style="left:1422px;top:1035.9px;width:368px;height:17.500px;background:#f0f0f0"></div>
<div class="abs" style="left:1109px;top:1067.7px;width:302px;height:17.500px;background:#f0f0f0"></div>
<div class="abs" style="left:1422px;top:1067.7px;width:368px;height:17.500px;background:#f0f0f0"></div>
<div class="abs" style="left:1109px;top:1099.6px;width:302px;height:17.500px;background:#f0f0f0"></div>
<div class="abs" style="left:1422px;top:1099.6px;width:368px;height:17.500px;background:#f0f0f0"></div>
<div class="abs" style="left:971px;top:1062px;width:820px;height:28px;border:1.500px solid #12c4f4;border-radius:3px;background:rgba(18,196,244,.11)"></div>
<div class="abs" style="left:1142.4px;top:930px;width:1px;height:201px;background:rgba(0,0,0,.075)"></div>
<div class="abs" style="left:1196.3px;top:930px;width:1px;height:201px;background:rgba(0,0,0,.075)"></div>
<div class="abs" style="left:1250.1px;top:930px;width:1px;height:201px;background:rgba(0,0,0,.075)"></div>
<div class="abs" style="left:1304.0px;top:930px;width:1px;height:201px;background:rgba(0,0,0,.075)"></div>
<div class="abs" style="left:1357.9px;top:930px;width:1px;height:201px;background:rgba(0,0,0,.075)"></div>
<div class="abs" style="left:1411.8px;top:930px;width:1px;height:201px;background:rgba(0,0,0,.075)"></div>
<div class="abs" style="left:1476.1px;top:930px;width:1px;height:201px;background:rgba(0,0,0,.075)"></div>
<div class="abs" style="left:1529.9px;top:930px;width:1px;height:201px;background:rgba(0,0,0,.075)"></div>
<div class="abs" style="left:1583.8px;top:930px;width:1px;height:201px;background:rgba(0,0,0,.075)"></div>
<div class="abs" style="left:1637.7px;top:930px;width:1px;height:201px;background:rgba(0,0,0,.075)"></div>
<div class="abs" style="left:1691.5px;top:930px;width:1px;height:201px;background:rgba(0,0,0,.075)"></div>
<div class="abs" style="left:1745.4px;top:930px;width:1px;height:201px;background:rgba(0,0,0,.075)"></div>
<div class="abs" style="left:1115.5px;top:938px;width:1px;height:193px;background:rgba(0,0,0,.035)"></div>
<div class="abs" style="left:1169.3px;top:938px;width:1px;height:193px;background:rgba(0,0,0,.035)"></div>
<div class="abs" style="left:1223.2px;top:938px;width:1px;height:193px;background:rgba(0,0,0,.035)"></div>
<div class="abs" style="left:1277.1px;top:938px;width:1px;height:193px;background:rgba(0,0,0,.035)"></div>
<div class="abs" style="left:1330.9px;top:938px;width:1px;height:193px;background:rgba(0,0,0,.035)"></div>
<div class="abs" style="left:1384.8px;top:938px;width:1px;height:193px;background:rgba(0,0,0,.035)"></div>
<div class="abs" style="left:1449.1px;top:938px;width:1px;height:193px;background:rgba(0,0,0,.035)"></div>
<div class="abs" style="left:1503.0px;top:938px;width:1px;height:193px;background:rgba(0,0,0,.035)"></div>
<div class="abs" style="left:1556.9px;top:938px;width:1px;height:193px;background:rgba(0,0,0,.035)"></div>
<div class="abs" style="left:1610.7px;top:938px;width:1px;height:193px;background:rgba(0,0,0,.035)"></div>
<div class="abs" style="left:1664.6px;top:938px;width:1px;height:193px;background:rgba(0,0,0,.035)"></div>
<div class="abs" style="left:1718.5px;top:938px;width:1px;height:193px;background:rgba(0,0,0,.035)"></div>
<div class="abs" style="left:1772.4px;top:938px;width:1px;height:193px;background:rgba(0,0,0,.035)"></div>
<div class="abs" style="left:1422px;top:883px;width:1px;height:248px;background:rgba(0,0,0,.1)"></div>
<div class="abs plbl" style="left:1142.4px;top:913.800px">14</div>
<div class="abs plbl" style="left:1196.3px;top:913.800px">15</div>
<div class="abs plbl" style="left:1250.1px;top:913.800px">16</div>
<div class="abs plbl" style="left:1304.0px;top:913.800px">17</div>
<div class="abs plbl" style="left:1357.9px;top:913.800px">18</div>
<div class="abs plbl" style="left:1430.5px;top:913.800px">0</div>
<div class="abs plbl" style="left:1476.5px;top:913.800px">1</div>
<div class="abs plbl" style="left:1530px;top:913.800px">2</div>
<div class="abs plbl" style="left:1583.5px;top:913.800px">3</div>
<div class="abs plbl" style="left:1637.3px;top:913.800px">4</div>
<div class="abs plbl" style="left:1691px;top:913.800px">5</div>
<div class="abs plbl" style="left:1744.5px;top:913.800px">6</div>
<div class="abs plbl" style="left:1432.500px;top:890px">25 Апреля, Суббота</div>
<div class="abs" style="left:1422px;top:928px;width:54px;height:203px;background:rgba(18,196,244,.36)"></div>
<div class="abs" style="left:1422px;top:1004px;width:54px;height:17.500px;border-radius:4px;background:#b9afc0"></div>
<div class="abs" style="left:1422px;top:1035.500px;width:54px;height:17.500px;border-radius:4px;background:#b9afc0"></div>
<div class="abs" style="left:1422px;top:1067.500px;width:54px;height:17.500px;border-radius:4px;background:#00ccf5"></div>
<div class="abs" style="left:1445.500px;top:1024px;width:1px;height:6px;background:rgba(255,255,255,.6);box-shadow:3px 0 0 rgba(255,255,255,.6),6px 0 0 rgba(255,255,255,.6)"></div>
<div class="abs" style="left:975px;top:970.6px;font-size:14px;line-height:20px;color:#535c69;white-space:nowrap;letter-spacing:-.22px">Стол №1</div>
<div class="abs" style="left:975px;top:1002.5px;font-size:14px;line-height:20px;color:#535c69;white-space:nowrap;letter-spacing:-.22px">Стол №2</div>
<div class="abs" style="left:975px;top:1034.4px;font-size:14px;line-height:20px;color:#535c69;white-space:nowrap;letter-spacing:-.22px">Стол №3</div>
<div class="abs" style="left:975px;top:1066.2px;font-size:14px;line-height:20px;color:#535c69;white-space:nowrap;letter-spacing:-.22px">Стол №4</div>
<div class="abs" style="left:975px;top:1098.1px;font-size:14px;line-height:20px;color:#535c69;white-space:nowrap;letter-spacing:-.22px">Стол №5</div>
<div class="abs" style="left:1109px;top:1143px;width:681px;height:17.500px;background:#f0f0f0"></div>
<div class="abs" style="left:1323px;top:1143px;width:38.500px;height:17.500px;background:#c8c8c8"></div>
<svg class="abs" style="left:1114px;top:1147px" width="8" height="10" viewBox="0 0 8 10"><path d="M6.500 1L2 5L6.500 9" fill="none" stroke="#333" stroke-width="2"/></svg>
<svg class="abs" style="left:1777px;top:1147px" width="8" height="10" viewBox="0 0 8 10"><path d="M1.500 1L6 5L1.500 9" fill="none" stroke="#333" stroke-width="2"/></svg>
<div class="abs" style="left:312px;top:1036px;width:588.500px;height:260px;background:#fff;box-shadow:0 3px 10px rgba(60,80,100,.22)"></div>
<div class="abs" style="left:312px;top:1084px;width:588.500px;height:38px;background:#f5f7f8"></div>
<div class="abs" style="left:312px;top:1242px;width:588.500px;height:1px;background:#e8ebee"></div>
<div class="abs" style="left:329.500px;top:1056.3px;width:17.500px;height:17.500px;border-radius:2px;border:1px solid #c8ced4;background:#fff"></div>
<div class="abs" style="left:355.500px;top:1054.8px;font-size:15px;line-height:20px;color:#535c69;white-space:nowrap;letter-spacing:-.65px">Стол №1</div>
<div class="abs" style="left:329.500px;top:1095.6px;width:17.500px;height:17.500px;border-radius:2px;border:1px solid #c8ced4;background:#fbfbfc"></div>
<div class="abs" style="left:355.500px;top:1094.1px;font-size:15px;line-height:20px;color:#535c69;white-space:nowrap;letter-spacing:-.65px">Стол №2</div>
<div class="abs" style="left:329.500px;top:1135.3px;width:17.500px;height:17.500px;border-radius:2px;border:1px solid #c8ced4;background:#fff"></div>
<div class="abs" style="left:355.500px;top:1133.8px;font-size:15px;line-height:20px;color:#535c69;white-space:nowrap;letter-spacing:-.65px">Стол №3</div>
<div class="abs" style="left:329.500px;top:1174.6px;width:17.500px;height:17.500px;border-radius:2px;background:#7d8590"></div>
<svg class="abs" style="left:333px;top:1179.1px" width="11" height="9" viewBox="0 0 11 9"><path d="M1.500 4.500L4.300 7L9.500 1.800" fill="none" stroke="#fff" stroke-width="1.800"/></svg>
<div class="abs" style="left:355.500px;top:1173.1px;font-size:15px;line-height:20px;color:#535c69;white-space:nowrap;letter-spacing:-.65px">Стол №4</div>
<div class="abs" style="left:329.500px;top:1214.3px;width:17.500px;height:17.500px;border-radius:2px;border:1px solid #c8ced4;background:#fff"></div>
<div class="abs" style="left:355.500px;top:1212.8px;font-size:15px;line-height:20px;color:#535c69;white-space:nowrap;letter-spacing:-.65px">Стол №5</div>
<div class="abs" style="left:329.500px;top:1255.4px;width:17.500px;height:17.500px;border-radius:2px;border:1px solid #c8ced4;background:#fff"></div>
<div class="abs" style="left:355.500px;top:1253.9px;font-size:15px;line-height:20px;color:#535c69;white-space:nowrap;letter-spacing:-.3px">Выбрать все ресурсы</div>
<div class="abs" style="left:1884px;top:97px;width:18px;height:1183px;background:#f1f1f1"></div>
<div class="abs" style="left:1884px;top:114.500px;width:17px;height:520px;background:#c9c9c9"></div>
<svg class="abs" style="left:1888px;top:102px" width="9" height="7" viewBox="0 0 9 7"><path d="M1 6L4.500 2L8 6" fill="none" stroke="#404040" stroke-width="1.800"/></svg>
<div class="abs" style="left:1902px;top:97px;width:18px;height:1183px;background:#eef2f4"></div>
</body></html>
